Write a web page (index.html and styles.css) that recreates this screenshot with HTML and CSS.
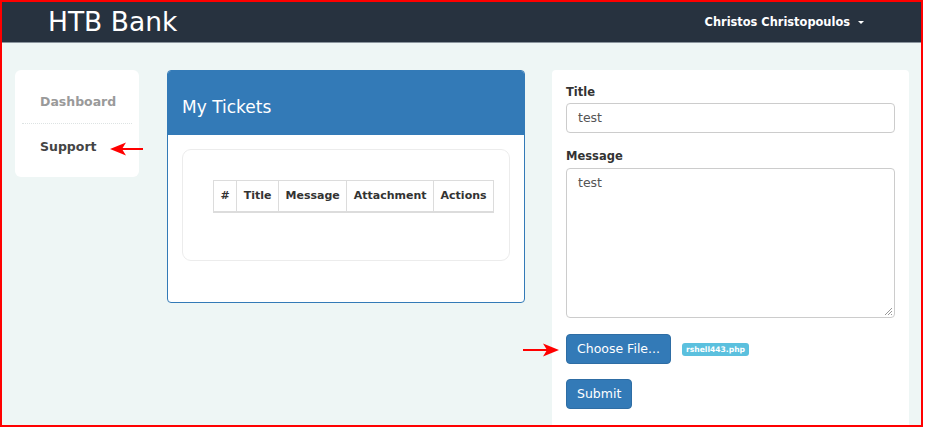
FILE: index.html
```html
<!DOCTYPE html>
<html>
<head>
<meta charset="utf-8">
<link rel="stylesheet" href="styles.css">
</head>
<body>
<div class="frame">
  <header class="navbar">
    <div class="brand">HTB Bank</div>
    <div class="user">Christos Christopoulos <span class="caret"></span></div>
  </header>
  <main class="main">
    <nav class="sidebar">
      <div class="side-item muted">Dashboard</div>
      <div class="side-item active">Support</div>
    </nav>
    <section class="panel">
      <div class="panel-heading">My Tickets</div>
      <div class="panel-body">
        <div class="well">
          <table class="tickets">
            <thead>
              <tr><th>#</th><th>Title</th><th>Message</th><th>Attachment</th><th>Actions</th></tr>
            </thead>
          </table>
        </div>
      </div>
    </section>
    <section class="form-card">
      <div class="form-group">
        <label class="label">Title</label>
        <div class="input">test</div>
      </div>
      <div class="form-group msg">
        <label class="label">Message</label>
        <div class="textarea">test
          <svg class="grip" width="9" height="9" viewBox="0 0 9 9"><path d="M8 1L1 8M8 4L4 8M8 7L7 8" stroke="#999" stroke-width="1"/></svg>
        </div>
      </div>
      <div class="file-row">
        <div class="btn">Choose File...</div>
        <span class="badge">rshell443.php</span>
      </div>
      <div class="btn submit">Submit</div>
    </section>
  </main>
  <svg class="arrow arrow-left" width="34" height="14" viewBox="0 0 34 14"><path d="M33 7H12" stroke="#f00" stroke-width="2"/><path d="M0 7L16 0.5L12 7L16 13.5Z" fill="#f00"/></svg>
  <svg class="arrow arrow-right" width="36" height="14" viewBox="0 0 36 14"><path d="M0 7H24" stroke="#f00" stroke-width="2"/><path d="M36 7L20 0.5L24 7L20 13.5Z" fill="#f00"/></svg>
</div>
</body>
</html>
```
FILE: styles.css
```css
* { box-sizing: border-box; }
html, body { margin: 0; padding: 0; background: #fff; }
body { font-family: "DejaVu Sans", sans-serif; color: #333; }
.frame {
  position: relative;
  width: 923px;
  height: 427px;
  border: 2px solid #f00;
  background: #eef6f5;
  overflow: hidden;
}
.navbar {
  height: 41px;
  background: #27323f;
  border-bottom: 1px solid #8b959e;
  display: flex;
  align-items: center;
  justify-content: space-between;
  padding: 0 57px 0 46px;
}
.brand { color: #fff; font-size: 26.5px; line-height: 1; margin-top: 1px; }
.user { color: #fff; font-size: 11.4px; font-weight: bold; display: flex; align-items: center; gap: 8px; }
.caret { width: 0; height: 0; border-left: 3.5px solid transparent; border-right: 3.5px solid transparent; border-top: 3.5px solid #fff; }
.main {
  display: flex;
  align-items: flex-start;
  padding: 27px 0 0 13px;
}
.sidebar {
  width: 124px;
  background: #fff;
  border-radius: 6px;
  padding: 9px 7px 7px;
}
.side-item {
  font-size: 12.5px;
  font-weight: bold;
  padding: 0 0 0 18px;
  height: 46px;
  line-height: 46px;
}
.side-item.muted { color: #9a9a9a; border-bottom: 1px dotted #dde3e3; height: 45px; line-height: 45px; }
.side-item.active { color: #444; line-height: 46px; height: 46px; }
.panel {
  margin-left: 28px;
  width: 358px;
  height: 233px;
  background: #fff;
  border: 1px solid #337ab7;
  border-radius: 4px;
  overflow: hidden;
}
.panel-heading {
  background: #337ab7;
  color: #fff;
  height: 64px;
  padding: 0 14px;
  font-size: 17px;
  line-height: 72px;
}
.panel-body { padding: 14px; }
.well {
  border: 1px solid #ececec;
  border-radius: 9px;
  height: 112px;
  padding: 30px 0 0 30px;
}
.tickets { border-collapse: collapse; }
.tickets th {
  border: 1px solid #dcdcdc;
  border-bottom: 2px solid #dcdcdc;
  font-size: 11px;
  font-weight: bold;
  color: #333;
  height: 31px;
  padding: 0 6.5px;
  text-align: left;
}
.form-card {
  margin-left: 27px;
  width: 357px;
  height: 380px;
  background: #fff;
  border-radius: 4px;
  padding: 15px 14px;
}
.form-group { margin-bottom: 16px; }
.form-group.msg { margin-bottom: 16px; }
.label { display: block; font-size: 11.5px; font-weight: bold; color: #333; margin-bottom: 4px; }
.msg .label { margin-bottom: 5px; }
.input, .textarea {
  border: 1px solid #ccc;
  border-radius: 4px;
  color: #555;
  font-size: 12.5px;
  padding: 0 11px;
  width: 329px;
}
.input { height: 30px; line-height: 28px; }
.textarea { position: relative; height: 150px; line-height: 28px; }
.grip { position: absolute; right: 1px; bottom: 1px; }
.file-row { display: flex; align-items: center; gap: 11px; margin-bottom: 15px; }
.btn {
  display: inline-block;
  background: #337ab7;
  border: 1px solid #2e6da4;
  border-radius: 4px;
  color: #fff;
  font-size: 12.5px;
  height: 30px;
  line-height: 28px;
  padding: 0 10px;
}
.badge {
  background: #5bc0de;
  color: #fff;
  font-size: 7.6px;
  font-weight: bold;
  border-radius: 3px;
  padding: 2px 4px;
  line-height: 9px;
}
.arrow { position: absolute; }
.arrow-left { left: 108px; top: 140px; }
.arrow-right { left: 521px; top: 341px; }
```
